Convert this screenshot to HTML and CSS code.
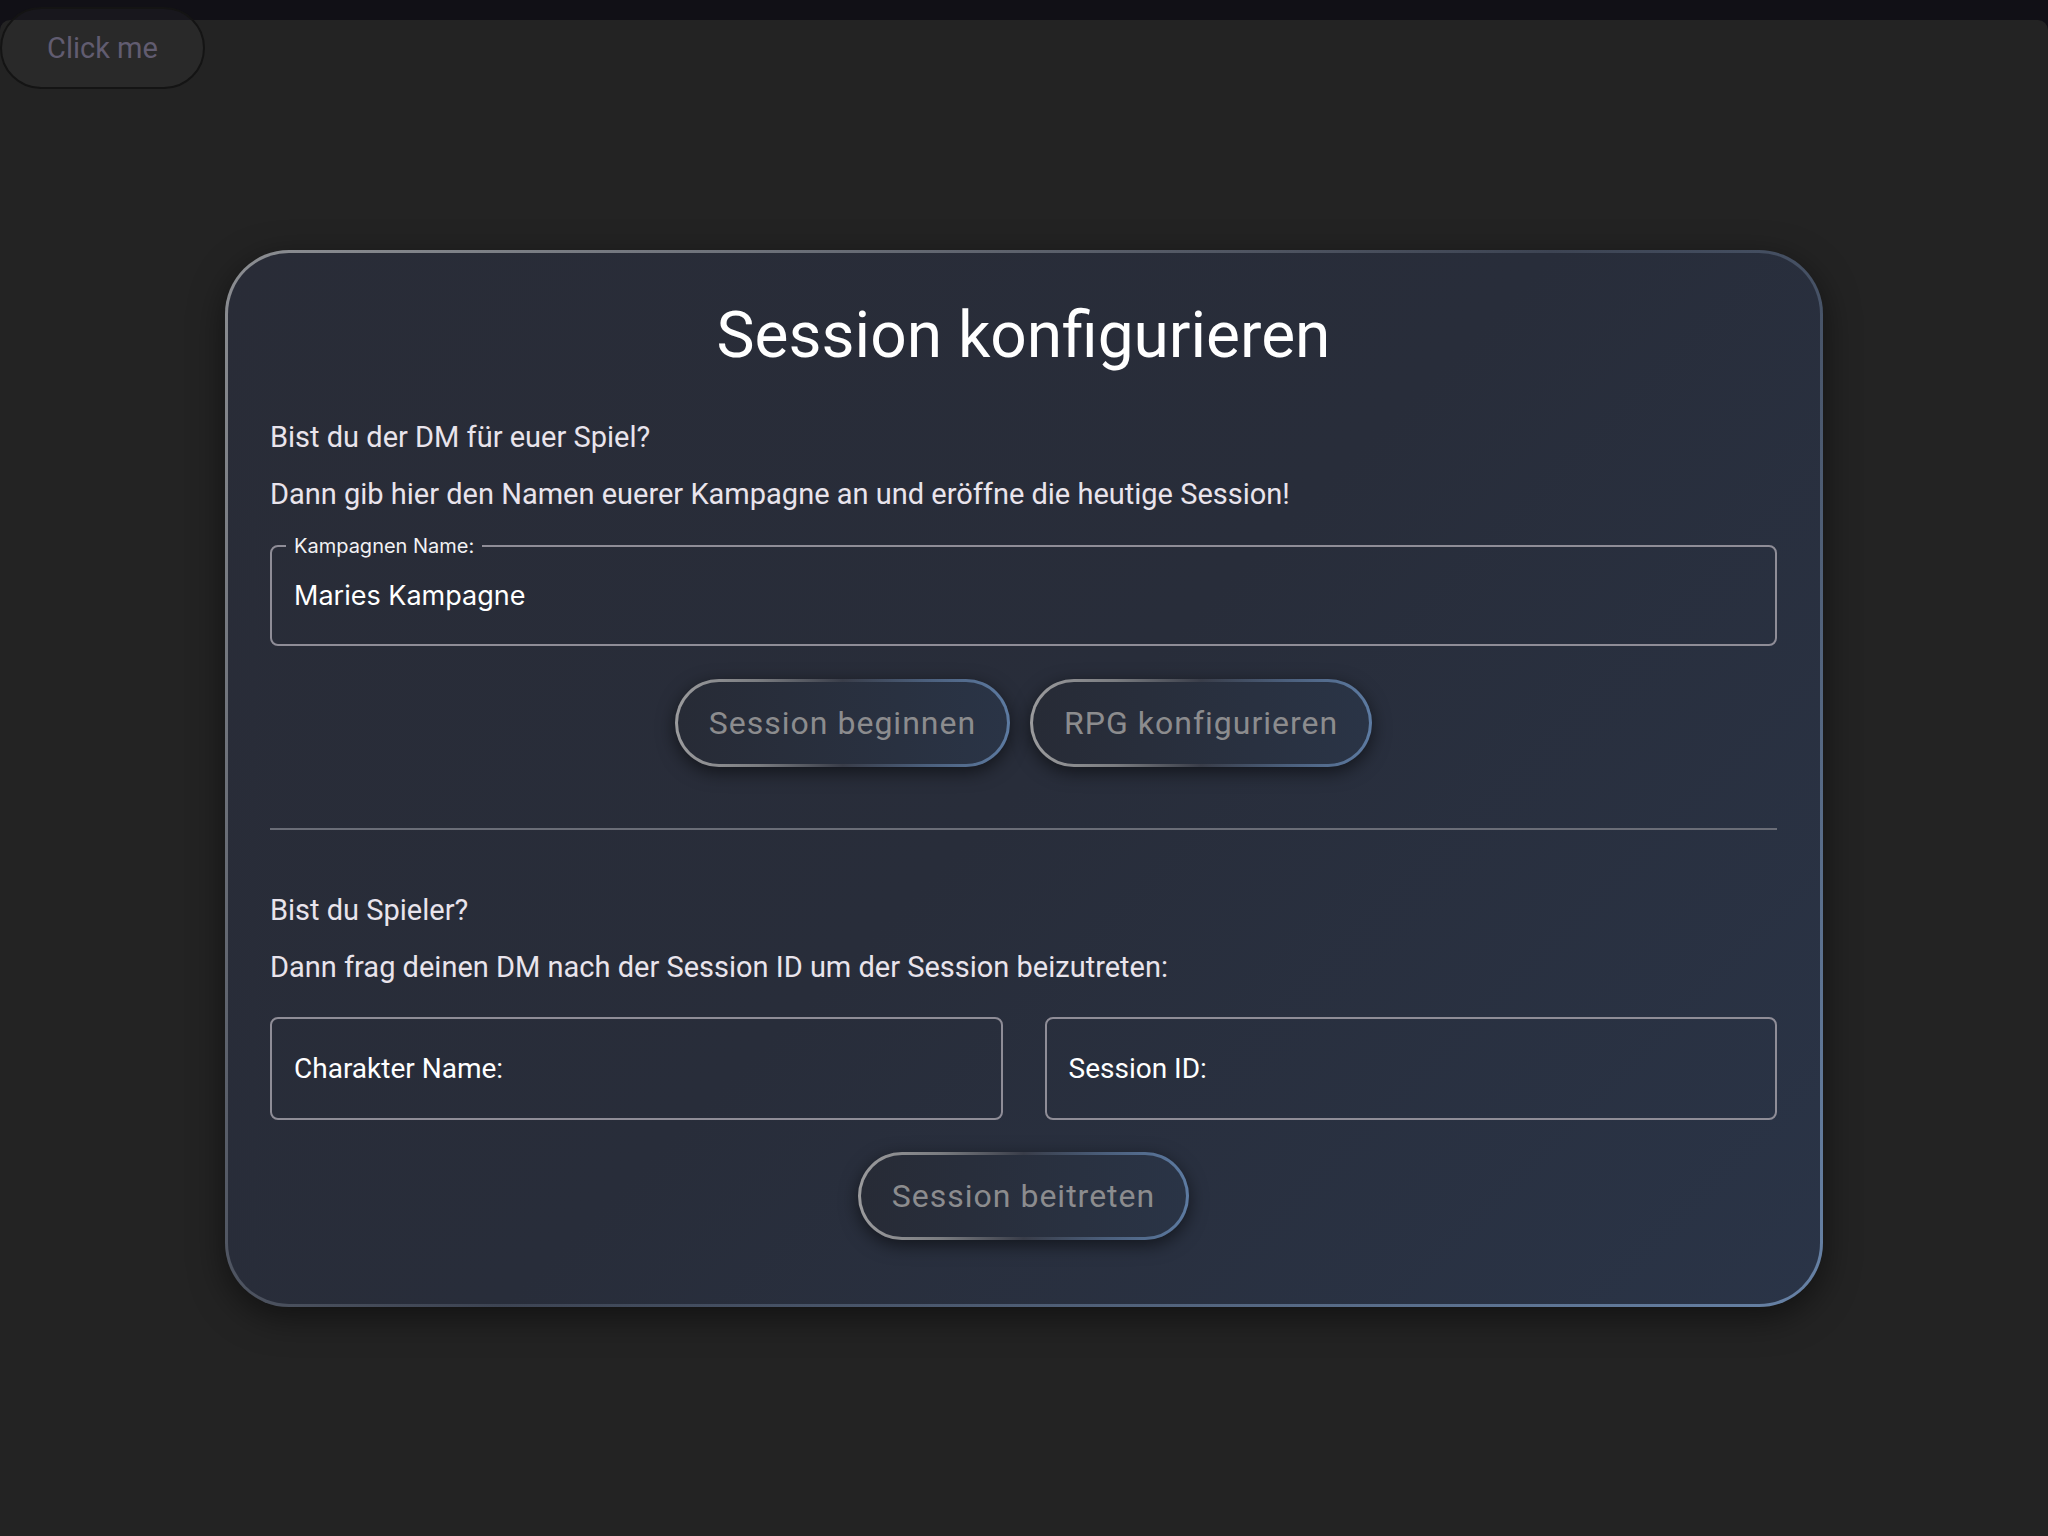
FILE: index.html
```html
<!DOCTYPE html>
<html lang="de">
<head>
<meta charset="utf-8">
<title>Session konfigurieren</title>
<link rel="stylesheet" href="styles.css">
</head>
<body>
<button class="click-btn">Click me</button>
<main class="main">
  <section class="card">
    <h1 class="title">Session konfigurieren</h1>
    <p class="text text-first">Bist du der DM für euer Spiel?</p>
    <p class="text text-next">Dann gib hier den Namen euerer Kampagne an und eröffne die heutige Session!</p>
    <fieldset class="field">
      <legend class="legend">Kampagnen Name:</legend>
      <div class="value">Maries Kampagne</div>
    </fieldset>
    <div class="btn-row">
      <button class="pill">Session beginnen</button>
      <button class="pill">RPG konfigurieren</button>
    </div>
    <hr class="divider">
    <p class="text text-second">Bist du Spieler?</p>
    <p class="text text-next">Dann frag deinen DM nach der Session ID um der Session beizutreten:</p>
    <div class="field-grid">
      <div class="box">Charakter Name:</div>
      <div class="box">Session ID:</div>
    </div>
    <div class="btn-row btn-row-last">
      <button class="pill">Session beitreten</button>
    </div>
  </section>
</main>
</body>
</html>
```
FILE: styles.css
```css
html, body {
  margin: 0;
  padding: 0;
}
body {
  background: #111016;
  min-height: 1536px;
  font-family: Roboto, "Liberation Sans", sans-serif;
}
.click-btn {
  position: absolute;
  left: 0;
  top: 7px;
  width: 205px;
  height: 82px;
  border-radius: 41px;
  border: 2px solid #141414;
  background: rgba(255, 255, 255, 0.03);
  color: #615c70;
  font-family: Roboto, "Liberation Sans", sans-serif;
  font-size: 29px;
  padding: 0;
  z-index: 2;
}
.main {
  margin-top: 20px;
  background: #232323;
  border-radius: 10px 10px 0 0;
  min-height: 1516px;
  padding-top: 230px;
  box-sizing: border-box;
}
.card {
  width: 1598px;
  margin: 0 auto;
  box-sizing: border-box;
  border: 3px solid transparent;
  border-radius: 64px;
  background:
    linear-gradient(135deg, #292c37 0%, #282d3a 50%, #2a3447 100%) padding-box,
    linear-gradient(135deg, #8c8e92 0%, #3d4453 50%, #6782a6 100%) border-box;
  box-shadow: 0 10px 34px rgba(0, 0, 0, 0.5);
  padding: 47px 43px 64px 42px;
  display: flex;
  flex-direction: column;
}
.title {
  margin: 0;
  text-align: center;
  font-size: 64px;
  font-weight: 400;
  line-height: 72px;
  color: #ffffff;
}
.text {
  margin: 0;
  font-size: 29px;
  line-height: 40px;
  color: #e9e4ec;
}
.text-first { margin-top: 45px; }
.text-next { margin-top: 17px; }
.text-second { margin-top: 60px; }
.field {
  margin: 20px 0 0 0;
  border: 2px solid #8f8d97;
  border-radius: 8px;
  padding: 21px 22px 31px 22px;
  min-width: 0;
}
.legend {
  margin-left: -8px;
  padding: 0 8px;
  font-family: Inter, "Liberation Sans", sans-serif;
  font-size: 20px;
  line-height: 24px;
  color: #f2f2f4;
}
.value {
  font-family: Inter, "Liberation Sans", sans-serif;
  font-size: 27px;
  line-height: 34px;
  color: #ffffff;
}
.btn-row {
  margin-top: 33px;
  display: flex;
  justify-content: center;
  gap: 20px;
}
.btn-row-last {
  margin-top: 32px;
}
.pill {
  box-sizing: border-box;
  height: 88px;
  padding: 0 31px;
  border: 3px solid transparent;
  border-radius: 44px;
  background:
    linear-gradient(90deg, #272b36 0%, #2a3446 100%) padding-box,
    linear-gradient(90deg, #9b9b9d 0%, #7a7c80 25%, #393d49 50%, #4b5f7c 75%, #5d7ba2 100%) border-box;
  box-shadow: 0 5px 18px rgba(0, 0, 0, 0.55);
  font-family: Roboto, "Liberation Sans", sans-serif;
  font-size: 32px;
  letter-spacing: 1px;
  color: #8c8c8e;
}
.divider {
  margin: 61px 0 0 0;
  border: none;
  height: 2px;
  background: #6a6d77;
}
.field-grid {
  margin-top: 30px;
  display: grid;
  grid-template-columns: 1fr 1fr;
  gap: 42px;
}
.box {
  box-sizing: border-box;
  height: 103px;
  border: 2px solid #8f8d97;
  border-radius: 8px;
  padding: 0 22px;
  display: flex;
  align-items: center;
  font-size: 28px;
  color: #ffffff;
}
```
